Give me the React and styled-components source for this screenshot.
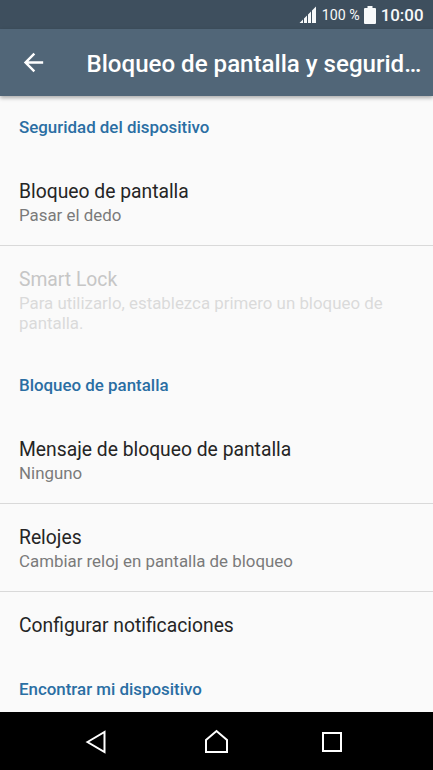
import React from "react";
import styled, { createGlobalStyle } from "styled-components";

const GlobalStyle = createGlobalStyle`
  * { box-sizing: border-box; }
  body { margin: 0; font-family: Roboto, sans-serif; background: #fafafa; }
`;

const Screen = styled.div`
  display: flex;
  flex-direction: column;
  width: 433px;
  height: 770px;
  overflow: hidden;
  background: #fafafa;
`;

const StatusBar = styled.header`
  display: flex;
  flex: none;
  align-items: center;
  justify-content: flex-end;
  height: 29px;
  padding: 1px 9.5px 0 0;
  background: #3e4f5e;
  color: #f7f9fa;
`;

const Battery = styled.span`
  margin: 0 4px 0 5px;
  font-size: 14.2px;
  line-height: 20px;
`;

const Clock = styled.span`
  margin-left: 5px;
  font-size: 16.9px;
  font-weight: 500;
  line-height: 20px;
`;

const Toolbar = styled.div`
  z-index: 1;
  display: flex;
  flex: none;
  align-items: center;
  height: 67px;
  padding: 0 10px 0 19px;
  background: #516678;
  box-shadow: 0 2px 4px rgba(0, 0, 0, 0.32);
  color: #fff;
`;

const BackButton = styled.button`
  display: flex;
  flex: none;
  width: 29px;
  margin-right: 38.5px;
  padding: 0;
  border: 0;
  background: none;
  color: inherit;
`;

const Title = styled.h1`
  flex: 1;
  min-width: 0;
  margin: 3px 0 0;
  overflow: hidden;
  font-size: 24.1px;
  font-weight: 500;
  line-height: 32px;
  text-overflow: ellipsis;
  white-space: nowrap;
`;

const Settings = styled.main`
  flex: 1;
  min-height: 0;
  overflow: hidden;
`;

const Category = styled.h2`
  height: 62px;
  margin: 0;
  padding: 21px 19px 0;
  color: #2a6ea3;
  font-size: 16.9px;
  font-weight: 500;
  line-height: 20px;
`;

const Item = styled.div`
  height: ${(p) => p.$height}px;
  padding: 22px 19px 0;
  border-bottom: ${(p) => (p.$divided ? "1px solid #d9d9d9" : "0")};
  color: ${(p) => (p.$disabled ? "#c6c6c6" : "#252525")};
`;

const ItemTitle = styled.div`
  font-size: 19.3px;
  line-height: 24px;
`;

const Summary = styled.div`
  margin-top: 1px;
  color: ${(p) => (p.$disabled ? "#dadada" : "#7a7a7a")};
  font-size: 16.88px;
  line-height: 20px;
`;

const NavBar = styled.nav`
  display: flex;
  flex: none;
  align-items: center;
  justify-content: space-between;
  height: 58px;
  padding: 2px 87px 0 82px;
  background: #000;
  color: #fff;
`;

function Setting({ title, summary, height = 88, disabled, divided }) {
  return (
    <Item $height={height} $disabled={disabled} $divided={divided}>
      <ItemTitle>{title}</ItemTitle>
      {summary && <Summary $disabled={disabled}>{summary}</Summary>}
    </Item>
  );
}

function SignalIcon() {
  return (
    <svg width="18" height="18" viewBox="0 0 18 18" fill="currentColor">
      <path d="M.5 17 4 13.5V17zM5 17v-4.5l3-3V17zM9 17V8.5l3-3V17zM13 17V4.5L17 .5V17z" />
    </svg>
  );
}

function BatteryIcon() {
  return (
    <svg width="12" height="18" viewBox="0 0 12 18" fill="currentColor">
      <path d="M3.5 0h5v2H11q1 0 1 1v14q0 1-1 1H1q-1 0-1-1V3q0-1 1-1h2.5z" />
    </svg>
  );
}

export default function App() {
  return (
    <>
      <GlobalStyle />
      <Screen>
        <StatusBar>
          <SignalIcon />
          <Battery>100 %</Battery>
          <BatteryIcon />
          <Clock>10:00</Clock>
        </StatusBar>
        <Toolbar>
          <BackButton aria-label="Atrás">
            <svg width="29" height="29" viewBox="0 0 24 24" fill="currentColor">
              <path d="M20 11H7.83l5.59-5.59L12 4l-8 8 8 8 1.41-1.41L7.83 13H20v-2z" />
            </svg>
          </BackButton>
          <Title>Bloqueo de pantalla y seguridad</Title>
        </Toolbar>
        <Settings>
          <Category>Seguridad del dispositivo</Category>
          <Setting title="Bloqueo de pantalla" summary="Pasar el dedo" divided />
          <Setting
            title="Smart Lock"
            summary="Para utilizarlo, establezca primero un bloqueo de pantalla."
            height={108}
            disabled
          />
          <Category>Bloqueo de pantalla</Category>
          <Setting title="Mensaje de bloqueo de pantalla" summary="Ninguno" divided />
          <Setting title="Relojes" summary="Cambiar reloj en pantalla de bloqueo" divided />
          <Setting title="Configurar notificaciones" height={66} />
          <Category>Encontrar mi dispositivo</Category>
        </Settings>
        <NavBar>
          <svg width="28" height="28" viewBox="0 0 28 28" fill="none" stroke="currentColor" strokeWidth="2">
            <path d="M5.5 14 22.5 4v20z" />
          </svg>
          <svg width="34" height="28" viewBox="0 0 34 28" fill="none" stroke="currentColor" strokeWidth="2">
            <path d="M9 12 19.5 3 30 12v12H9z" />
          </svg>
          <svg width="28" height="28" viewBox="0 0 28 28" fill="none" stroke="currentColor" strokeWidth="2">
            <path d="M5 5h18v18H5z" />
          </svg>
        </NavBar>
      </Screen>
    </>
  );
}
